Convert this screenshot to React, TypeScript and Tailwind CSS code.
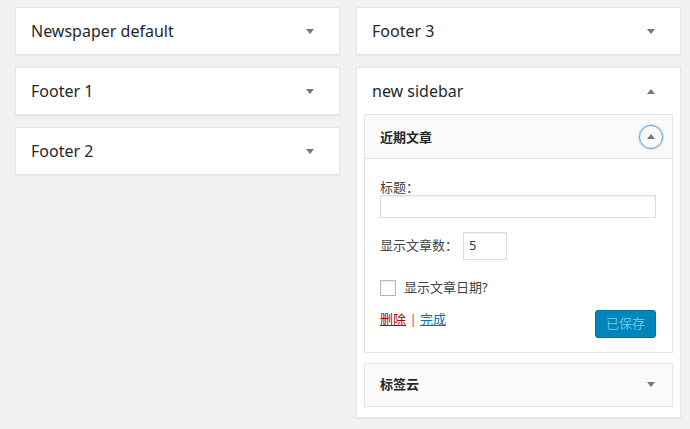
import { ReactNode } from 'react';

const FONT = { fontFamily: '"Noto Sans", "Noto Sans CJK SC", sans-serif' };

function Arrow({ up = false }: { up?: boolean }) {
  return (
    <svg width="8" height="5" viewBox="0 0 8 5" className="text-[#72777c]">
      <path d={up ? 'M0 5 L4 0 L8 5 Z' : 'M0 0 L8 0 L4 5 Z'} fill="currentColor" />
    </svg>
  );
}

function SidebarPanel({ title, open = false, children }: { title: string; open?: boolean; children?: ReactNode }) {
  return (
    <div className="bg-white border border-[#e5e5e5] shadow-[0_1px_1px_rgba(0,0,0,0.04)]">
      <div className="flex items-center justify-between h-[46px] pl-[15px] pr-[25px]">
        <h2 className="text-[16px] text-[#23282d]">{title}</h2>
        <Arrow up={open} />
      </div>
      {children}
    </div>
  );
}

export default function App() {
  return (
    <div className="min-h-screen bg-[#f1f1f1] text-[#444]" style={FONT}>
      <div className="flex gap-[16px] pt-[7px] pl-[15px]">
        <div className="w-[325px] flex flex-col gap-[12px]">
          <SidebarPanel title="Newspaper default" />
          <SidebarPanel title="Footer 1" />
          <SidebarPanel title="Footer 2" />
        </div>
        <div className="w-[325px] flex flex-col gap-[12px]">
          <SidebarPanel title="Footer 3" />
          <SidebarPanel title="new sidebar" open>
            <div className="px-[7px] pb-[10px] flex flex-col gap-[10px]">
              {/* Recent posts widget, expanded */}
              <div className="border border-[#e5e5e5] bg-white">
                <div className="flex items-center justify-between h-[44px] bg-[#fafafa] border-b border-[#e5e5e5] pl-[15px] pr-[9px]">
                  <h3 className="text-[13px] font-bold text-[#23282d] pt-[2px]">近期文章</h3>
                  <div className="w-[24px] h-[24px] rounded-full border border-[#5b9dd9] shadow-[0_0_2px_rgba(30,140,190,0.6)] flex items-center justify-center">
                    <Arrow up />
                  </div>
                </div>
                <div className="pl-[15px] pr-[16px] pt-[19px] pb-[14px] text-[13px] text-[#444]">
                  <label className="block leading-[18px]">标题：</label>
                  <div className="mt-[-1px] h-[23px] border border-[#ddd] shadow-[inset_0_1px_2px_rgba(0,0,0,0.07)]" />
                  <div className="flex items-center mt-[14px]">
                    <span>显示文章数：</span>
                    <div className="ml-[5px] w-[44px] h-[28px] border border-[#ddd] shadow-[inset_0_1px_2px_rgba(0,0,0,0.07)] flex items-center pl-[5px] text-[13px] text-[#32373c]">5</div>
                  </div>
                  <div className="flex items-center mt-[18px]">
                    <div className="w-[16px] h-[16px] border border-[#b4b9be] shadow-[inset_0_1px_2px_rgba(0,0,0,0.1)]" />
                    <span className="ml-[8px]">显示文章日期?</span>
                  </div>
                  <div className="flex items-start justify-between mt-[12px]">
                    <div>
                      <a className="text-[#a00] underline">删除</a>
                      <span className="text-[#666]"> | </span>
                      <a className="text-[#0073aa] underline">完成</a>
                    </div>
                    <button className="h-[28px] px-[10px] rounded-[3px] bg-[#0085ba] border border-[#0073aa] text-[#66c6e4] text-[13px]">已保存</button>
                  </div>
                </div>
              </div>
              {/* Tag cloud widget, collapsed */}
              <div className="border border-[#e5e5e5] bg-[#fafafa] h-[44px] flex items-center justify-between pl-[15px] pr-[17px]">
                <h3 className="text-[13px] font-bold text-[#23282d]">标签云</h3>
                <Arrow />
              </div>
            </div>
          </SidebarPanel>
        </div>
      </div>
    </div>
  );
}
